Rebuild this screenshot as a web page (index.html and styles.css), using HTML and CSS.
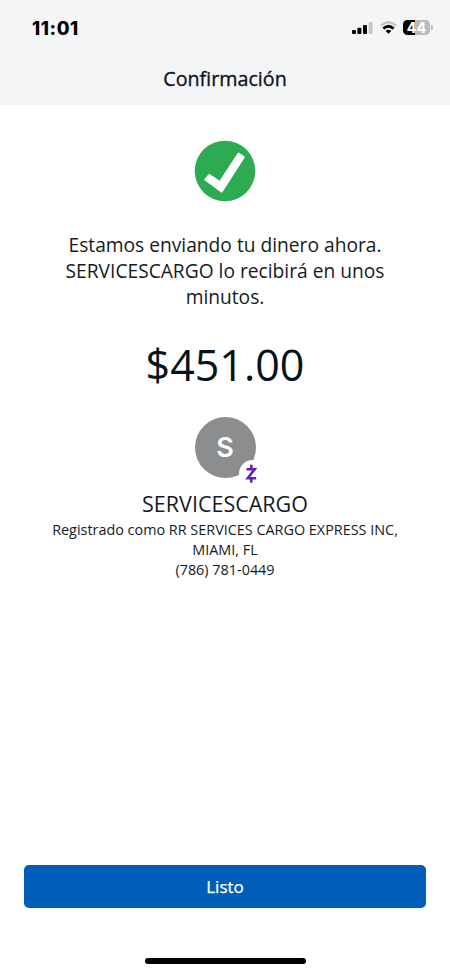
FILE: index.html
```html
<!DOCTYPE html>
<html lang="es">
<head>
<meta charset="utf-8">
<meta name="viewport" content="width=device-width, initial-scale=1">
<title>Confirmación</title>
<link rel="stylesheet" href="styles.css">
</head>
<body>
<div class="screen">
  <header class="header">
    <div class="status">
      <span class="time">11:01</span>
      <div class="indicators">
        <svg class="signal" width="21" height="12" viewBox="0 0 21 12">
          <rect x="0" y="8" width="4" height="4" rx="1"/>
          <rect x="5.4" y="5.8" width="4" height="6.2" rx="1"/>
          <rect x="11" y="3" width="4" height="9" rx="1"/>
          <rect x="16.6" y="0" width="4" height="12" rx="1" fill="#c5c6c8"/>
        </svg>
        <svg class="wifi" width="17" height="13" viewBox="0 0 17 13" fill="none" stroke-width="2.4">
          <path d="M1 4.6Q8.5-2.2 16 4.6" stroke="#c5c6c8"/>
          <path d="M3.4 7.6Q8.5 3 13.6 7.6" stroke="#000" stroke-width="2.8"/>
          <path d="M8.5 12.8L5.6 10Q8.5 7.6 11.4 10Z" fill="#000"/>
        </svg>
        <div class="battery"><span class="level">44</span><i class="cap"></i></div>
      </div>
    </div>
    <h1 class="title">Confirmación</h1>
  </header>
  <main class="content">
    <svg class="check" width="62" height="62" viewBox="0 0 62 62">
      <circle cx="31" cy="31" r="30.3" fill="#2dab52"/>
      <path d="M10.4 38.9L14.4 34.4Q15.2 33.6 16.1 34.3L25.6 40.7L43.6 13.2Q44.3 12.2 45.3 12.9L50.3 16.2Q51.2 16.8 50.6 17.8L28.6 51.9Q27.9 53 26.8 52.2L10.6 40.3Q9.7 39.6 10.4 38.9Z" fill="#fff"/>
    </svg>
    <p class="message">Estamos enviando tu dinero ahora.<br>SERVICESCARGO lo recibirá en unos<br>minutos.</p>
    <div class="amount">$451.00</div>
    <div class="avatar">S
      <span class="badge">
        <svg width="24" height="24" viewBox="0 0 24 24" fill="none" stroke="#6420bd">
          <path d="M6.5 7.3H14.6L7.8 16.2H16.2" stroke-width="2.6"/>
          <path d="M11.3 2.8V7.3M11.3 16.2V20.8" stroke-width="2.5"/>
        </svg>
      </span>
    </div>
    <h2 class="name">SERVICESCARGO</h2>
    <p class="details">Registrado como RR SERVICES CARGO EXPRESS INC,<br>MIAMI, FL<br>(786) 781-0449</p>
  </main>
  <footer class="footer">
    <button class="done">Listo</button>
    <div class="home"></div>
  </footer>
</div>
</body>
</html>
```
FILE: styles.css
```css
* { box-sizing: border-box; margin: 0; padding: 0; }
body { background: #fff; font-family: "Open Sans", sans-serif; color: #151b22; }
.screen { width: 450px; height: 973px; display: flex; flex-direction: column; overflow: hidden; }
.header { height: 105px; background: #f4f5f7; }
.status { height: 55px; padding: 0 17px 0 32px; display: flex; justify-content: space-between; align-items: center; }
.time { font: 800 18.5px/22px Inter, sans-serif; letter-spacing: 0.6px; color: #000; padding-top: 1px; }
.indicators { display: flex; align-items: center; }
.signal { margin-top: 1px; }
.wifi { margin: 0 6px 0 7px; }
.battery { position: relative; width: 27px; height: 15px; border-radius: 4.5px; background: linear-gradient(90deg, #000 45%, #b9babc 45%); margin-right: 3px; text-align: center; }
.level { display: block; font: 800 14px/15px Inter, sans-serif; color: #fff; }
.cap { position: absolute; right: -3px; top: 5px; width: 2px; height: 5px; border-radius: 0 2px 2px 0; background: #b9babc; }
.title { font-size: 19.7px; line-height: 26px; font-weight: 500; text-align: center; padding-top: 11px; color: #10151b; -webkit-text-stroke: 0.35px #10151b; }
.content { flex: 1; display: flex; flex-direction: column; align-items: center; padding-top: 35px; text-align: center; }
.message { margin-top: 30px; font-size: 19.2px; line-height: 26px; }
.amount { margin-top: 25px; font-size: 43px; line-height: 60px; color: #08121b; }
.avatar { position: relative; margin-top: 22px; width: 61px; height: 61px; border-radius: 50%; background: #8c8d8f; color: #fff; font: 600 27px/62px Inter, sans-serif; }
.badge { position: absolute; left: 44px; top: 43px; width: 27px; height: 27px; border-radius: 50%; background: #fff; display: flex; align-items: center; justify-content: center; }
.name { margin-top: 11px; font-size: 21.5px; line-height: 30px; font-weight: 400; }
.details { margin-top: 1px; font-size: 14.4px; line-height: 20px; }
.footer { padding: 0 24px 9px; display: flex; flex-direction: column; align-items: center; }
.done { width: 402px; height: 43px; border: 0; border-radius: 5px; background: #005eb8; color: #fff; font: 500 17px/43px "Open Sans", sans-serif; -webkit-text-stroke: 0.25px #fff; }
.home { margin-top: 50px; width: 161px; height: 6px; border-radius: 3px; background: #000; }
```
